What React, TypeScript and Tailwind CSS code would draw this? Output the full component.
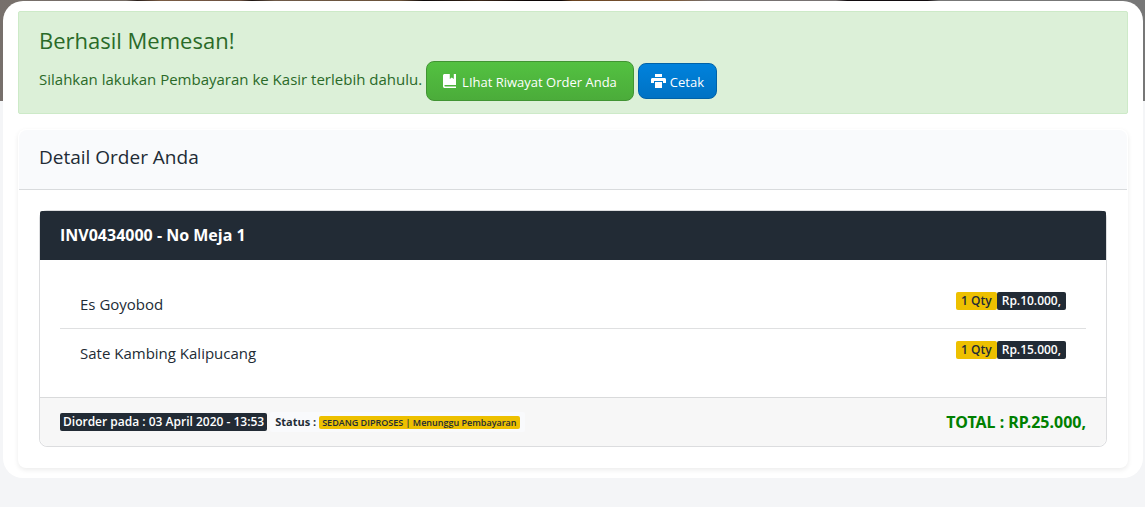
import type { ReactNode } from 'react';

type Item = { name: string; qty: number; price: string };

const items: Item[] = [
  { name: 'Es Goyobod', qty: 1, price: 'Rp.10.000,' },
  { name: 'Sate Kambing Kalipucang', qty: 1, price: 'Rp.15.000,' },
];

function BookIcon() {
  return (
    <svg viewBox="0 0 14 16" className="h-4 w-[14px]" fill="currentColor" aria-hidden="true">
      <path d="M1.6 1H6.8V6L8.8 4.6L10.8 6V1H13V12H2.2C1.6 12 1.3 12.3 1.3 12.8C1.3 13.3 1.6 13.6 2.2 13.6H13V15H1.8C.7 15 0 14.2 0 13.2V2.6C0 1.7.7 1 1.6 1Z" />
    </svg>
  );
}

function PrintIcon() {
  return (
    <svg viewBox="0 0 15 16" className="h-4 w-[15px]" fill="currentColor" aria-hidden="true">
      <path d="M4 1H11V4H4ZM1.5 5H13.500C14.400 5 15 5.600 15 6.500V10H12V8H3V10H0V6.500C0 5.600.6 5 1.500 5ZM4 9H11V15H4Z" />
    </svg>
  );
}

function Badge({ dark, children }: { dark?: boolean; children: ReactNode }) {
  return (
    <span
      className={
        dark
          ? 'rounded-xs bg-[#222b35] px-[5px] text-xs leading-[18px] font-semibold text-white'
          : 'rounded-xs bg-[#edc000] px-[5px] text-xs leading-[18px] font-semibold text-[#222b35]'
      }
    >
      {children}
    </span>
  );
}

export default function App() {
  return (
    <div className="relative min-h-screen bg-[#f4f5f7] pr-[2px] pb-7 pl-[3px] pt-px font-['Open_Sans','Noto_Sans',sans-serif] text-[15px] text-[#222b35]">
      <div className="absolute inset-x-0 top-0 h-[101px] bg-[linear-gradient(90deg,#77706c_0%,#756b64_11%,#2a201c_12%,#7a5c44_14%,#6b5040_21%,#1d1512_22%,#6f5a48_24%,#6a5138_35%,#0c0808_37%,#3a2618_42%,#0c0606_46%,#0c0606_49%,#6a4320_50%,#7c5a3c_59%,#777272_62%,#777272_73%,#120c10_74%,#120c10_81%,#777777_82%,#777777_100%)]" />
      <main className="relative rounded-[20px] bg-white px-[15px] py-[10px]">
        <section className="rounded-xs border border-[#cdeac8] bg-[#dcf0d8] px-5 py-3 text-[#2a6a28]">
          <h1 className="mb-[5px] text-[22px] leading-8">Berhasil Memesan!</h1>
          <div className="flex flex-wrap items-center gap-1">
            <p className="pb-1 leading-8">Silahkan lakukan Pembayaran ke Kasir terlebih dahulu.</p>
            <button className="flex h-10 items-center gap-[5px] rounded-lg border border-[#419433] bg-linear-to-b from-[#53c141] to-[#4bac3a] px-4 text-[13px] text-white">
              <BookIcon />
              <span className="pt-1">LIhat Riwayat Order Anda</span>
            </button>
            <button className="flex h-9 items-center gap-1 rounded-lg border border-[#0062a8] bg-linear-to-b from-[#0082dc] to-[#0072c4] px-3 text-[13px] text-white">
              <PrintIcon />
              <span className="pt-1">Cetak</span>
            </button>
          </div>
        </section>

        <section className="mt-[15px] rounded-lg border border-transparent bg-white shadow-[0_2px_5px_rgba(0,0,0,0.08)]">
          <h2 className="rounded-t-lg border-b border-[#d9dbdd] bg-[#f9fafc] px-5 pt-[11px] pb-4 text-[19px] leading-8">
            Detail Order Anda
          </h2>
          <div className="p-5">
            <article className="rounded-lg border border-[#dcdddf]">
              <h3 className="rounded-t-xs bg-[#222b35] px-5 py-3 text-base leading-[25px] font-bold text-white">
                INV0434000 - No Meja 1
              </h3>
              <ul className="p-5">
                {items.map((item) => (
                  <li
                    key={item.name}
                    className="flex items-start justify-between border-b border-[#dfe0e1] px-5 py-3 last:border-b-0"
                  >
                    <span className="leading-6">{item.name}</span>
                    <span className="flex">
                      <Badge>{item.qty} Qty</Badge>
                      <Badge dark>{item.price}</Badge>
                    </span>
                  </li>
                ))}
              </ul>
              <footer className="flex items-center justify-between rounded-b-lg border-t border-[#d9dadb] bg-[#f7f7f7] px-5 py-3">
                <div className="flex items-center gap-[3px]">
                  <span className="rounded-xs bg-[#222b35] px-[3px] text-xs leading-[18px] font-semibold text-white">
                    Diorder pada : 03 April 2020 - 13:53
                  </span>
                  <span className="flex items-center gap-[3px] rounded-xs bg-[#f9fafc] px-[5px] text-[11px] leading-5 font-bold">
                    Status :
                    <span className="rounded-xs bg-[#edc000] px-[3px] text-[9px] leading-[13px] font-semibold">
                      SEDANG DIPROSES | Menunggu Pembayaran
                    </span>
                  </span>
                </div>
                <strong className="font-['Noto_Sans','Open_Sans',sans-serif] text-base leading-6 font-bold text-[#008000]">
                  TOTAL : RP.25.000,
                </strong>
              </footer>
            </article>
          </div>
        </section>
      </main>
    </div>
  );
}
